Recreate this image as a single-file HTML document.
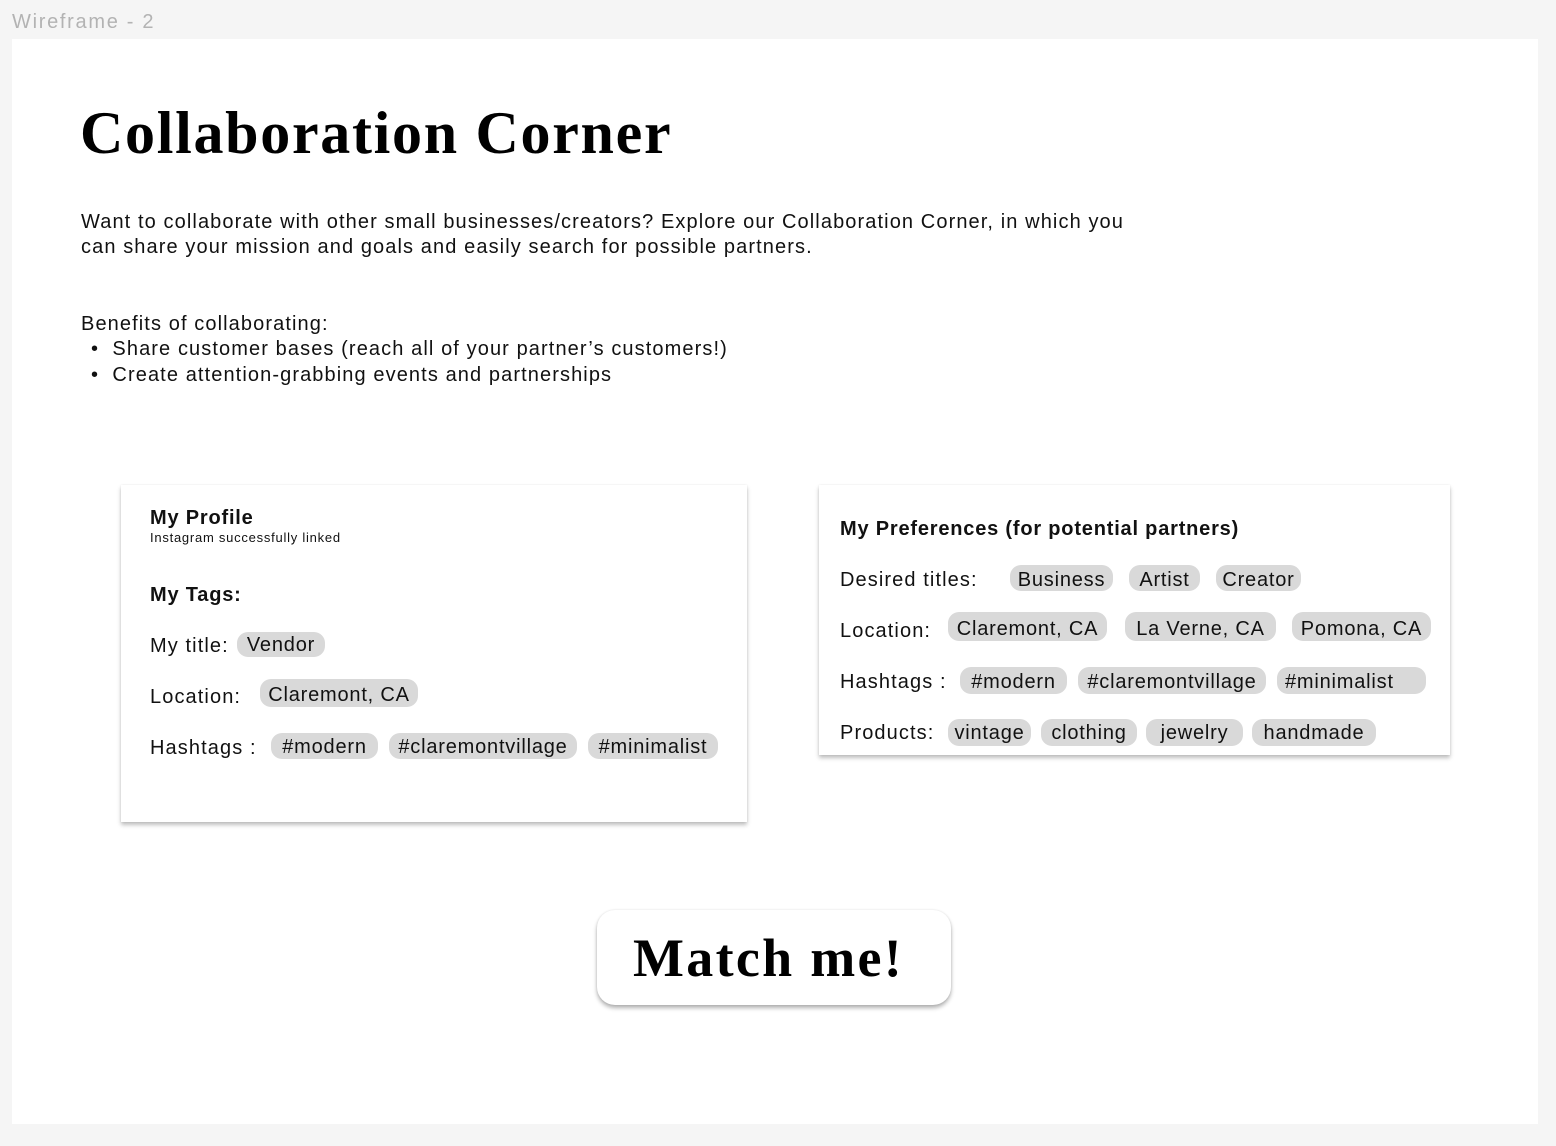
<!DOCTYPE html>
<html><head><meta charset="utf-8">
<style>
*{margin:0;padding:0;box-sizing:border-box}
body{width:1556px;height:1146px;background:#f5f5f5;position:relative;overflow:hidden;font-family:"Liberation Sans",sans-serif;color:#111}
.a{position:absolute;white-space:nowrap}
.frame{position:absolute;left:12px;top:39px;width:1526px;height:1085px;background:#fff}
.card{position:absolute;background:#fff;box-shadow:0 3px 4px rgba(0,0,0,.25),0 0 2px rgba(0,0,0,.08)}
.t{font-size:20px;line-height:24px;letter-spacing:1.1px}
.chip{position:absolute;background:#d9d9d9;border-radius:11px;font-size:20px;text-align:center;white-space:nowrap;color:#111;letter-spacing:0.8px}
</style></head><body>
<div class="a" style="left:12px;top:10px;font-size:20px;line-height:24px;color:#b3b3b3;letter-spacing:1.7px">Wireframe - 2</div>
<div class="frame"></div>
<div class="a" style="left:80px;top:99px;font-family:'Liberation Serif',serif;font-weight:bold;font-size:60px;line-height:68px;color:#000;letter-spacing:1.7px">Collaboration Corner</div>
<div class="a t" style="left:81px;top:210px">Want to collaborate with other small businesses/creators? Explore our Collaboration Corner, in which you</div>
<div class="a t" style="left:81px;top:235px">can share your mission and goals and easily search for possible partners.</div>
<div class="a t" style="left:81px;top:312px">Benefits of collaborating:</div>
<div class="a t" style="left:91px;top:337px">•&nbsp; Share customer bases (reach all of your partner’s customers!)</div>
<div class="a t" style="left:91px;top:363px">•&nbsp; Create attention-grabbing events and partnerships</div>

<div class="card" style="left:121px;top:485px;width:626px;height:337px"></div>
<div class="a" style="left:150px;top:506px;font-size:20px;line-height:24px;font-weight:bold;letter-spacing:0.8px">My Profile</div>
<div class="a" style="left:150px;top:530px;font-size:13px;line-height:16px;letter-spacing:0.75px">Instagram successfully linked</div>
<div class="a" style="left:150px;top:583px;font-size:20px;line-height:24px;font-weight:bold;letter-spacing:0.8px">My Tags:</div>
<div class="a t" style="left:150px;top:634px">My title:</div>
<div class="chip" style="left:237px;top:632px;width:88px;height:25px;line-height:27px">Vendor</div>
<div class="a t" style="left:150px;top:685px">Location:</div>
<div class="chip" style="left:260px;top:679px;width:158px;height:28px;line-height:32px">Claremont, CA</div>
<div class="a t" style="left:150px;top:736px">Hashtags :</div>
<div class="chip" style="left:271px;top:733px;width:107px;height:26px;line-height:29px">#modern</div>
<div class="chip" style="left:389px;top:733px;width:188px;height:26px;line-height:29px">#claremontvillage</div>
<div class="chip" style="left:588px;top:733px;width:130px;height:26px;line-height:29px">#minimalist</div>

<div class="card" style="left:819px;top:485px;width:631px;height:270px"></div>
<div class="a" style="left:840px;top:517px;font-size:20px;line-height:24px;font-weight:bold;letter-spacing:0.8px">My Preferences (for potential partners)</div>
<div class="a t" style="left:840px;top:568px">Desired titles:</div>
<div class="chip" style="left:1010px;top:565px;width:103px;height:26px;line-height:30px">Business</div>
<div class="chip" style="left:1129px;top:565px;width:71px;height:26px;line-height:30px">Artist</div>
<div class="chip" style="left:1216px;top:565px;width:85px;height:26px;line-height:30px">Creator</div>
<div class="a t" style="left:840px;top:619px">Location:</div>
<div class="chip" style="left:948px;top:612px;width:159px;height:29px;line-height:34px">Claremont, CA</div>
<div class="chip" style="left:1125px;top:612px;width:151px;height:29px;line-height:34px">La Verne, CA</div>
<div class="chip" style="left:1292px;top:612px;width:139px;height:29px;line-height:34px">Pomona, CA</div>
<div class="a t" style="left:840px;top:670px">Hashtags :</div>
<div class="chip" style="left:960px;top:667px;width:107px;height:27px;line-height:30px">#modern</div>
<div class="chip" style="left:1078px;top:667px;width:188px;height:27px;line-height:30px">#claremontvillage</div>
<div class="chip" style="left:1277px;top:667px;width:149px;height:27px;line-height:30px;text-align:left;padding-left:8px">#minimalist</div>
<div class="a t" style="left:840px;top:721px">Products:</div>
<div class="chip" style="left:948px;top:719px;width:83px;height:27px;line-height:28px">vintage</div>
<div class="chip" style="left:1041px;top:719px;width:96px;height:27px;line-height:28px">clothing</div>
<div class="chip" style="left:1146px;top:719px;width:97px;height:27px;line-height:28px">jewelry</div>
<div class="chip" style="left:1252px;top:719px;width:124px;height:27px;line-height:28px">handmade</div>

<div class="card" style="left:597px;top:910px;width:354px;height:95px;border-radius:18px;box-shadow:0 3px 4px rgba(0,0,0,.3),0 0 2px rgba(0,0,0,.1)"></div>
<div class="a" style="left:633px;top:926px;font-family:'Liberation Serif',serif;font-weight:bold;font-size:54px;line-height:64px;color:#000;letter-spacing:2.3px">Match me!</div>
</body></html>
